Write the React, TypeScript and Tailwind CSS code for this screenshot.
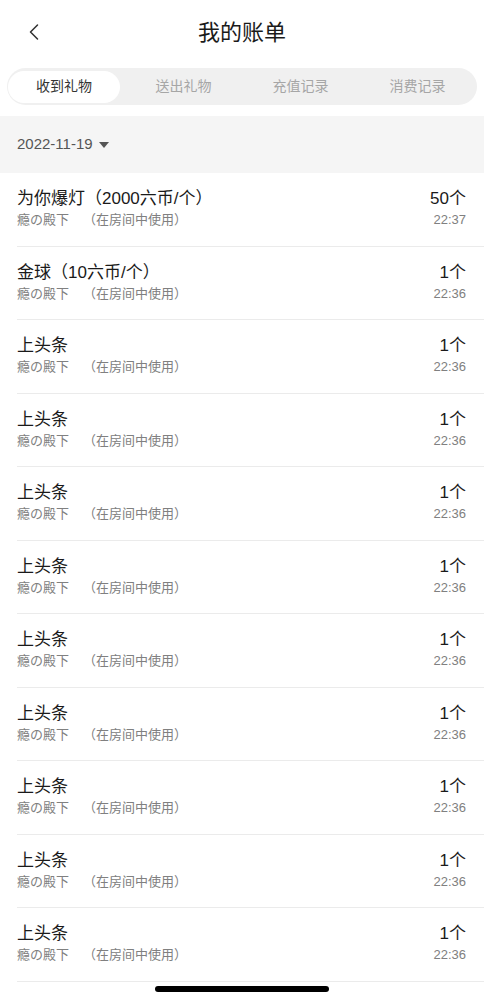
import { ChevronLeft } from 'lucide-react';

const tabs = ['收到礼物', '送出礼物', '充值记录', '消费记录'];

type Bill = { name: string; count: string; time: string };

const bills: Bill[] = [
  { name: '为你爆灯（2000六币/个）', count: '50个', time: '22:37' },
  { name: '金球（10六币/个）', count: '1个', time: '22:36' },
  ...Array.from({ length: 9 }, () => ({ name: '上头条', count: '1个', time: '22:36' })),
];

const font = { fontFamily: '"Liberation Sans", "Noto Sans CJK SC", sans-serif' };

function BillRow({ bill }: { bill: Bill }) {
  return (
    <div className="ml-[17px] flex h-[73.5px] shrink-0 items-start justify-between border-b border-[#ebebeb] pr-[18px] pt-[15px]">
      <div className="flex flex-col">
        <span className="text-[17px] leading-[22px] text-[#1a1a1a]">{bill.name}</span>
        <span className="mt-[1px] text-[13px] leading-[18px] text-[#808080]">
          瘾の殿下<span className="ml-[14px]">（在房间中使用）</span>
        </span>
      </div>
      <div className="flex flex-col items-end">
        <span className="text-[17px] leading-[22px] text-[#1a1a1a]">{bill.count}</span>
        <span className="mt-[1px] text-[13px] leading-[18px] text-[#808080]">{bill.time}</span>
      </div>
    </div>
  );
}

export default function App() {
  return (
    <div className="relative flex h-[1000px] w-[484px] flex-col overflow-hidden bg-white" style={font}>
      <header className="relative flex h-[64px] shrink-0 items-center justify-center">
        <ChevronLeft className="absolute left-[20px] top-[18px] text-[#333]" size={28} strokeWidth={1.3} />
        <h1 className="text-[22px] text-[#1a1a1a]">我的账单</h1>
      </header>

      <div className="mx-[7px] mt-[4px] grid h-[37px] shrink-0 grid-cols-4 items-center rounded-full bg-[#f0f0f0] px-[1px]">
        {tabs.map((t, i) => (
          <div
            key={t}
            className={
              i === 0
                ? 'flex h-[32px] w-[112px] items-center justify-center justify-self-start rounded-full bg-white text-[14px] text-[#333]'
                : 'flex h-[32px] items-center justify-center text-[14px] text-[#a6a6a6]'
            }
          >
            {t}
          </div>
        ))}
      </div>

      <div className="mt-[11px] flex h-[57px] shrink-0 items-center gap-[6px] bg-[#f5f5f5] px-[17px]">
        <span className="text-[15px] text-[#555]">2022-11-19</span>
        <svg width="10" height="6" viewBox="0 0 10 6" className="mt-[1px]">
          <path d="M0 0 L10 0 L5 6 Z" fill="#555" />
        </svg>
      </div>

      <div className="flex shrink-0 flex-col">
        {bills.map((b, i) => (
          <BillRow key={i} bill={b} />
        ))}
      </div>

      <div className="absolute bottom-[8px] left-[155px] h-[6px] w-[174px] rounded-full bg-black" />
    </div>
  );
}
